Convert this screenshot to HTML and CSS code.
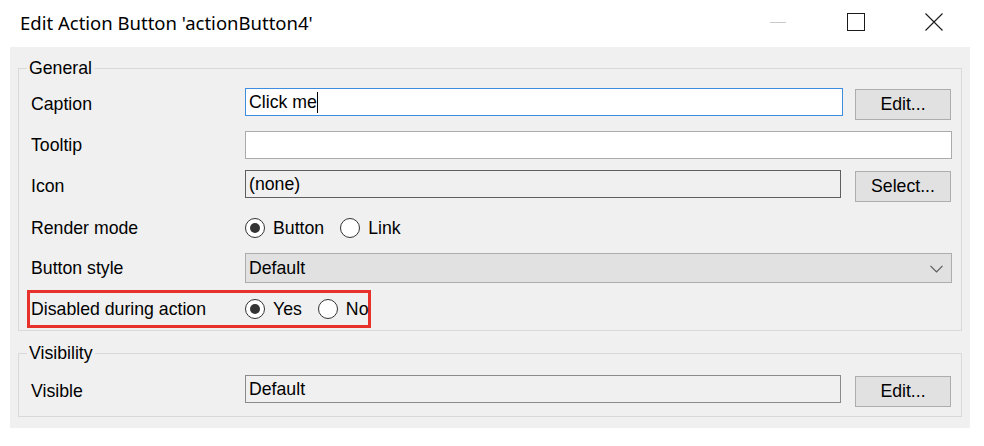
FILE: index.html
```html
<!DOCTYPE html>
<html lang="en">
<head>
<meta charset="utf-8">
<title>Edit Action Button</title>
<link rel="stylesheet" href="styles.css">
</head>
<body>
<div class="window">
  <header class="titlebar">
    <div class="title">Edit Action Button 'actionButton4'</div>
    <div class="caption-buttons">
      <span class="cbtn">
        <svg width="16" height="18" viewBox="0 0 16 18"><line x1="0" y1="9.5" x2="16" y2="9.5" stroke="#c9c9c9" stroke-width="1"/></svg>
      </span>
      <span class="cbtn">
        <svg width="18" height="18" viewBox="0 0 18 18"><rect x="0.5" y="0.5" width="17" height="17" fill="none" stroke="#1a1a1a" stroke-width="1"/></svg>
      </span>
      <span class="cbtn">
        <svg width="18" height="18" viewBox="0 0 18 18"><path d="M0.5 0.5 L17.5 17.5 M17.5 0.5 L0.5 17.5" stroke="#1a1a1a" stroke-width="1.1" fill="none"/></svg>
      </span>
    </div>
  </header>
  <main class="panel">
    <fieldset class="group group-general">
      <legend>General</legend>
      <div class="row row-caption">
        <span class="label">Caption</span>
        <div class="control">
          <div class="textbox focused">Click me<span class="caret"></span></div>
          <button class="btn">Edit...</button>
        </div>
      </div>
      <div class="row row-tooltip">
        <span class="label">Tooltip</span>
        <div class="control">
          <div class="textbox"></div>
        </div>
      </div>
      <div class="row row-icon">
        <span class="label">Icon</span>
        <div class="control">
          <div class="textbox readonly dark">(none)</div>
          <button class="btn">Select...</button>
        </div>
      </div>
      <div class="row row-render">
        <span class="label">Render mode</span>
        <div class="radios">
          <span class="radio checked"></span><span class="radio-text">Button</span>
          <span class="radio"></span><span class="radio-text">Link</span>
        </div>
      </div>
      <div class="row row-style">
        <span class="label">Button style</span>
        <div class="control">
          <div class="select">
            <span>Default</span>
            <svg class="chevron" width="13" height="8" viewBox="0 0 13 8"><path d="M0.5 0.8 L6.5 6.8 L12.5 0.8" fill="none" stroke="#5a5a5a" stroke-width="1.2"/></svg>
          </div>
        </div>
      </div>
      <div class="row row-disabled">
        <span class="label">Disabled during action</span>
        <div class="radios">
          <span class="radio checked"></span><span class="radio-text">Yes</span>
          <span class="radio"></span><span class="radio-text">No</span>
        </div>
      </div>
    </fieldset>
    <fieldset class="group group-visibility">
      <legend>Visibility</legend>
      <div class="row row-visible">
        <span class="label">Visible</span>
        <div class="control">
          <div class="textbox readonly">Default</div>
          <button class="btn">Edit...</button>
        </div>
      </div>
    </fieldset>
  </main>
</div>
</body>
</html>
```

FILE: styles.css
```css
* { box-sizing: border-box; }
html, body { margin: 0; padding: 0; background: #ffffff; }
body {
  font-family: "Liberation Sans", Arial, sans-serif;
  font-size: 17.7px;
  color: #000;
  width: 984px;
  height: 446px;
  overflow: hidden;
}
.window { width: 984px; }
.titlebar {
  height: 47px;
  display: flex;
  align-items: center;
  justify-content: space-between;
  background: #fff;
}
.title {
  font-family: "Noto Sans", "Open Sans", sans-serif;
  font-size: 18.5px;
  padding-left: 20px;
  color: #000;
  margin-top: -2px;
}
.caption-buttons {
  display: flex;
  padding-right: 11px;
  height: 47px;
}
.cbtn {
  width: 78px;
  height: 44px;
  display: flex;
  align-items: center;
  justify-content: center;
}
.cbtn svg { display: block; }
.panel {
  margin-left: 10px;
  width: 960px;
  height: 381px;
  background: #f0f0f0;
  padding: 11px 8px 0 8px;
}
.group {
  margin: 0;
  border: 1px solid #d9d9d9;
  padding: 8px 9px 2px 8px;
  min-width: 0;
}
.group legend {
  padding: 0 2px;
  line-height: 20px;
  font-size: 17.7px;
}
.group-visibility {
  margin-top: 12px;
  padding-top: 10px;
  padding-bottom: 7px;
}
.row {
  display: flex;
  align-items: center;
  padding-left: 4px;
}
.label {
  width: 214px;
  flex: none;
}
.control {
  flex: 1;
  display: flex;
  align-items: flex-start;
  gap: 12px;
}
.row-caption { height: 36px; }
.row-tooltip { height: 46px; }
.row-icon { height: 36px; }
.row-render { height: 48px; }
.row-style { height: 32px; }
.row-disabled {
  margin-top: 6px;
  height: 38px;
  width: 344px;
  border: 3px solid #e8312a;
  padding-left: 1px;
}
.row-visible { height: 36px; }
.textbox {
  flex: 1;
  height: 28px;
  background: #fff;
  border: 1px solid #ababab;
  padding: 0 3px;
  display: flex;
  align-items: center;
  white-space: nowrap;
}
.textbox.focused { border-color: #3d8ee0; }
.textbox.readonly { background: #f0f0f0; border-color: #8a8a8a; margin-right: 2px; }
.textbox.dark { border-color: #5f5f5f; }
.caret {
  display: inline-block;
  width: 1px;
  height: 21px;
  background: #000;
  margin-left: 0;
}
.btn {
  flex: none;
  width: 96px;
  height: 31px;
  margin-top: 1px;
  margin-right: 1px;
  background: #e1e1e1;
  border: 1px solid #adadad;
  font-family: inherit;
  font-size: 17.7px;
  color: #000;
  padding: 0;
}
.select {
  flex: 1;
  height: 30px;
  background: #e1e1e1;
  border: 1px solid #adadad;
  display: flex;
  align-items: center;
  justify-content: space-between;
  padding: 0 8px 0 3px;
}
.chevron { display: block; margin-top: 1px; }
.radios {
  display: flex;
  align-items: center;
}
.radio {
  width: 20px;
  height: 20px;
  border-radius: 50%;
  border: 1.5px solid #333;
  background: #fff;
  display: flex;
  align-items: center;
  justify-content: center;
  flex: none;
}
.radio.checked::after {
  content: "";
  width: 10px;
  height: 10px;
  border-radius: 50%;
  background: #333;
}
.radio-text {
  margin-left: 8px;
  margin-right: 16px;
}
.radio-text:last-child { margin-right: 0; }
```
